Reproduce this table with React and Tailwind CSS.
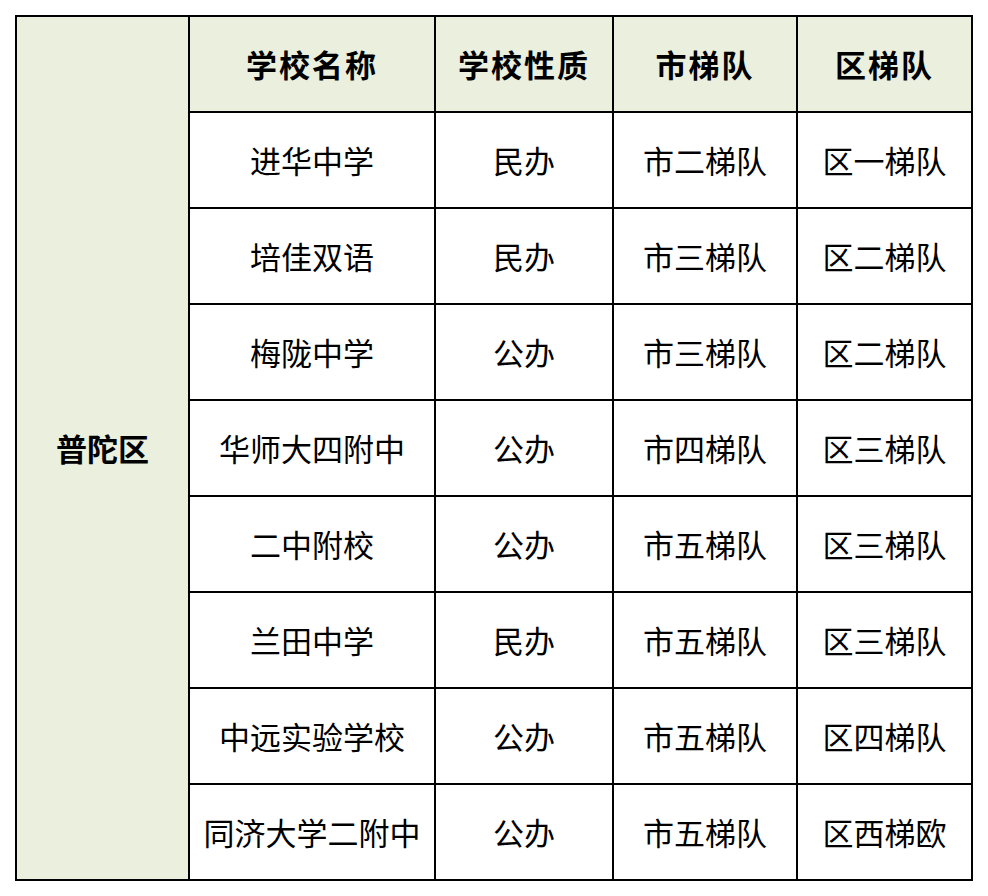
import React from 'react';

const rows = [
  ['进华中学', '民办', '市二梯队', '区一梯队'],
  ['培佳双语', '民办', '市三梯队', '区二梯队'],
  ['梅陇中学', '公办', '市三梯队', '区二梯队'],
  ['华师大四附中', '公办', '市四梯队', '区三梯队'],
  ['二中附校', '公办', '市五梯队', '区三梯队'],
  ['兰田中学', '民办', '市五梯队', '区三梯队'],
  ['中远实验学校', '公办', '市五梯队', '区四梯队'],
  ['同济大学二附中', '公办', '市五梯队', '区西梯欧'],
];

const Cell = ({ children, head }) => (
  <div
    className={`flex items-center justify-center text-[31px] text-black ${
      head ? 'bg-[#ebefde] font-bold tracking-[2px]' : 'bg-white'
    }`}
  >
    {children}
  </div>
);

export default function App() {
  return (
    <div
      className="min-h-[896px] w-[988px] bg-white pl-[15px] pt-[15px]"
      style={{ fontFamily: '"Noto Sans CJK SC", sans-serif' }}
    >
      <div className="grid w-[958px] grid-cols-[171px_244px_176px_182px_173px] grid-rows-[repeat(9,94px)] gap-[2px] bg-black p-[2px]">
        <div className="row-span-9 flex items-center justify-center bg-[#ebefde] text-[31px] font-bold text-black">
          普陀区
        </div>
        <Cell head>学校名称</Cell>
        <Cell head>学校性质</Cell>
        <Cell head>市梯队</Cell>
        <Cell head>区梯队</Cell>
        {rows.map((r, i) => (
          <React.Fragment key={i}>
            {r.map((c, j) => (
              <Cell key={j}>{c}</Cell>
            ))}
          </React.Fragment>
        ))}
      </div>
    </div>
  );
}
